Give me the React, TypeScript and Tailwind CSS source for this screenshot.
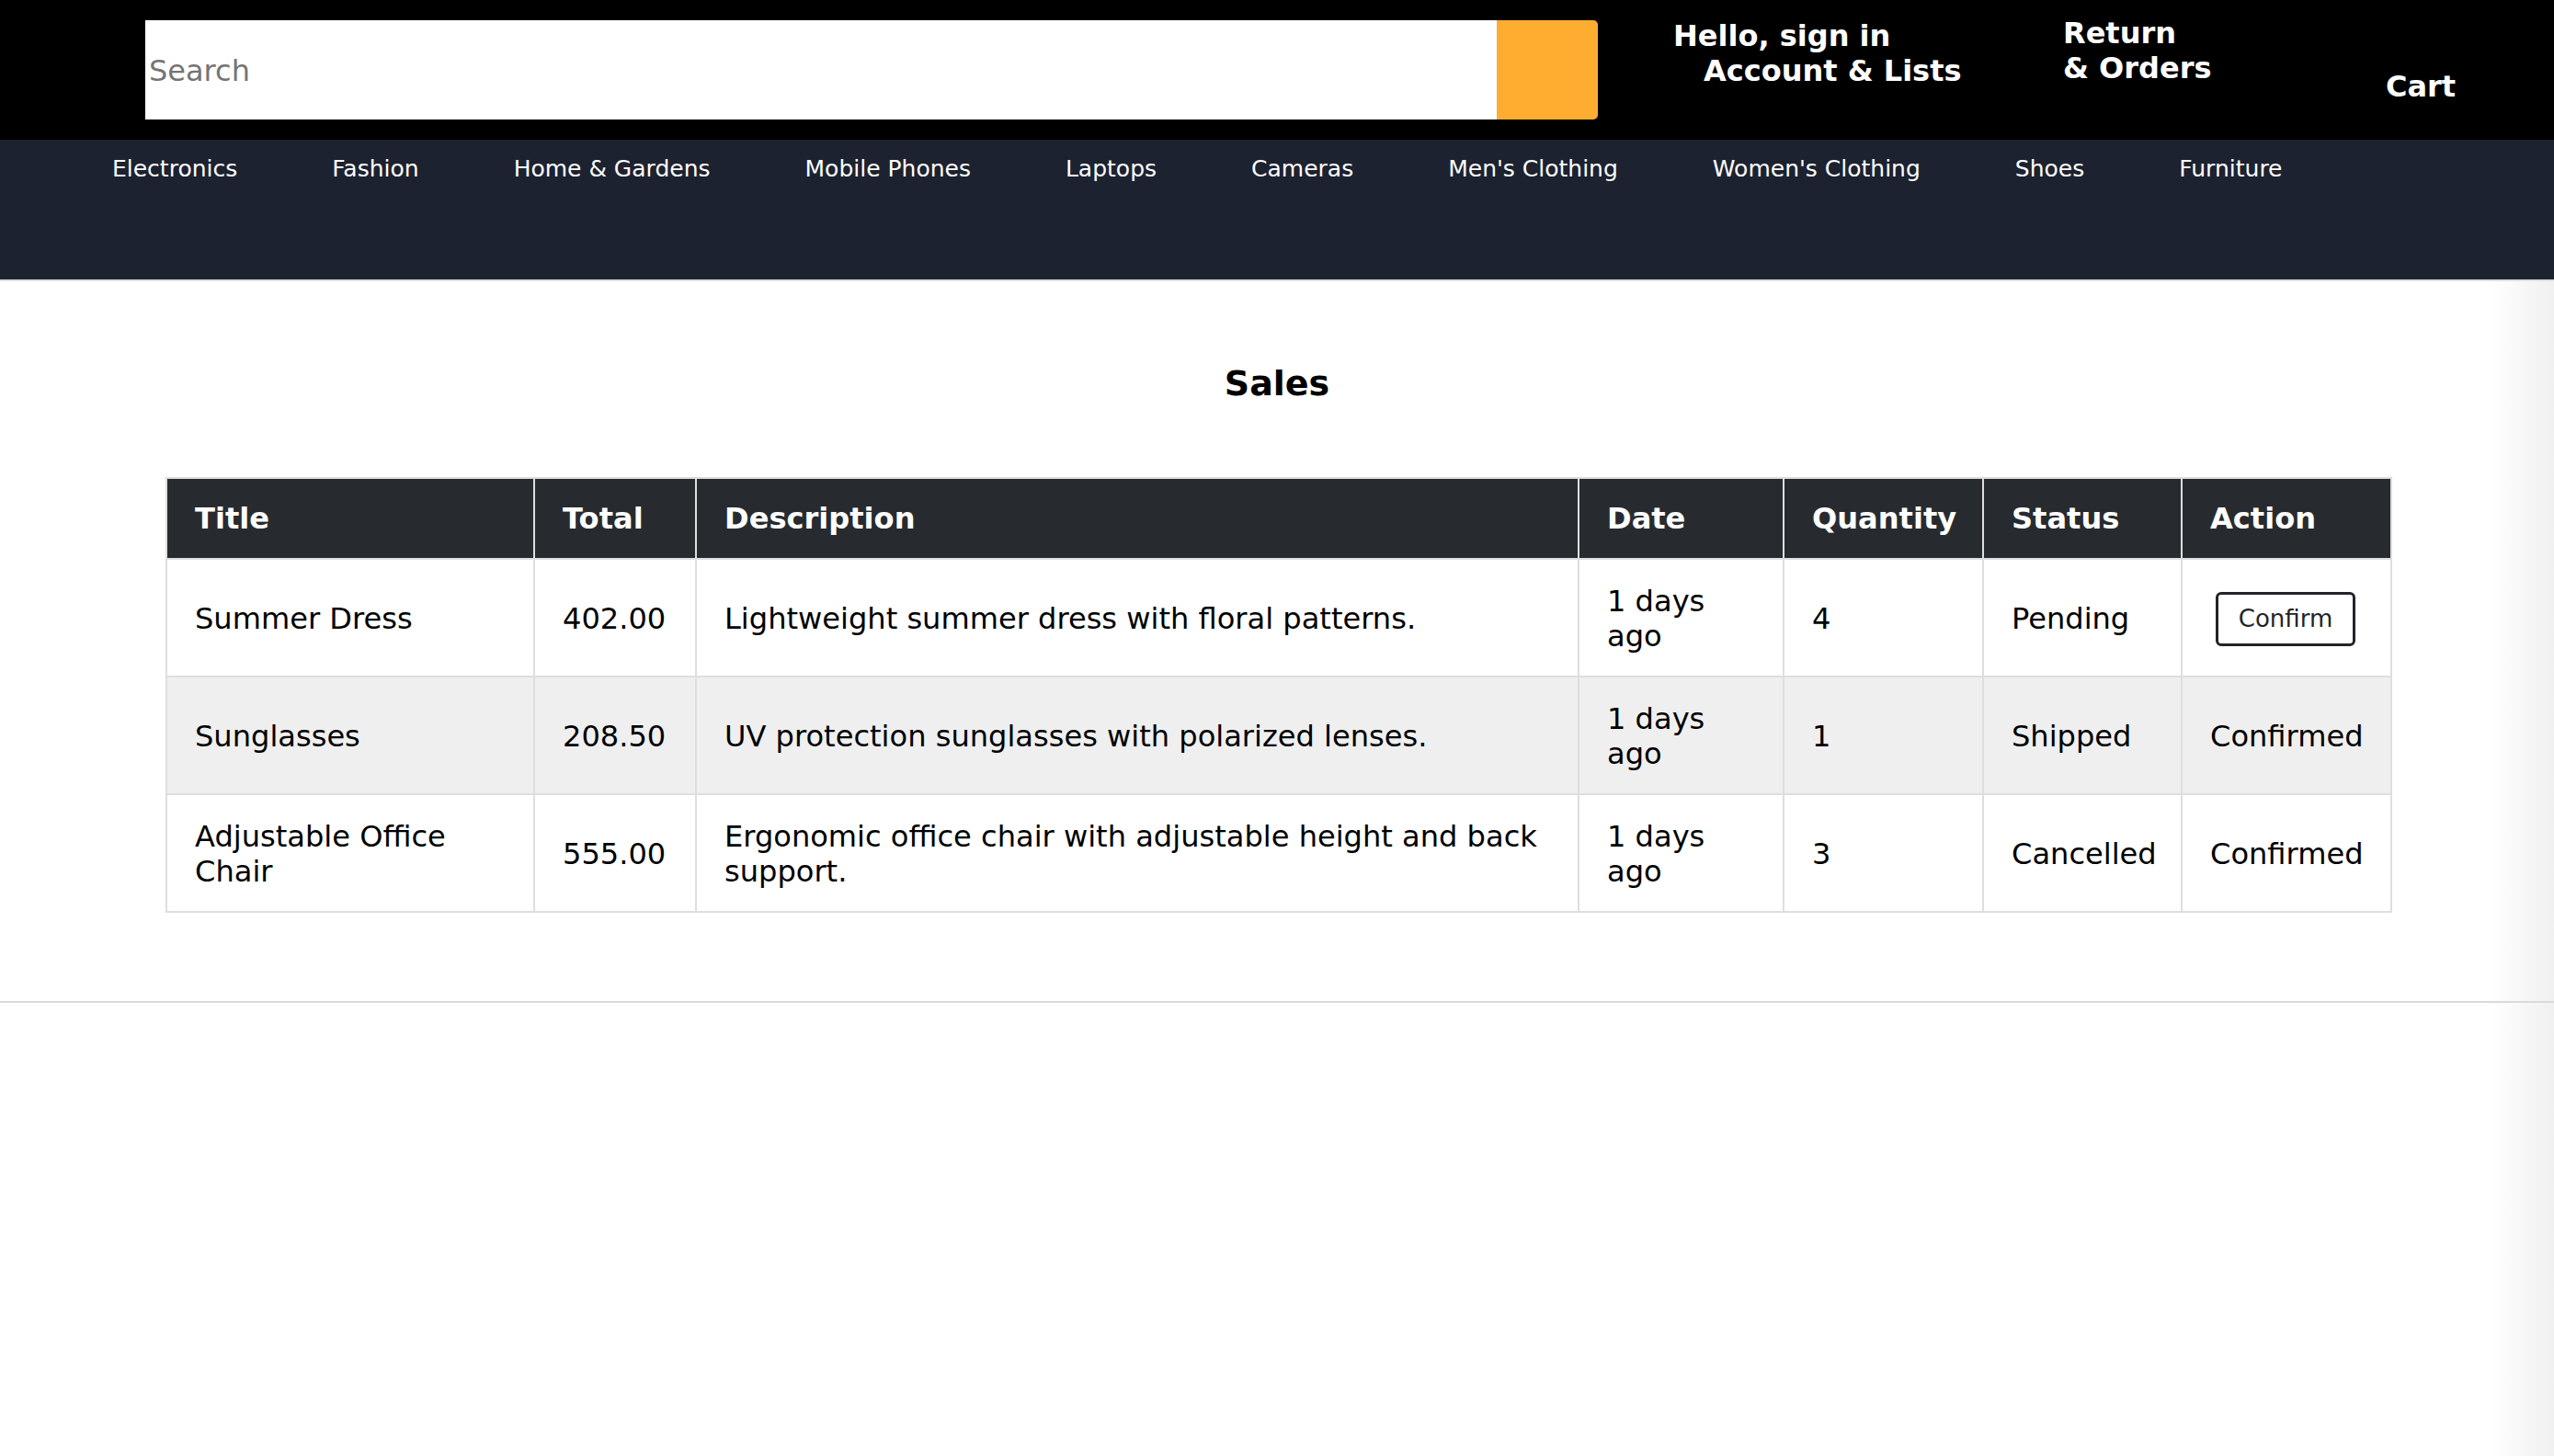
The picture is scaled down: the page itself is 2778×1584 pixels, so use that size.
import React from "react";

const categories = [
  "Electronics",
  "Fashion",
  "Home & Gardens",
  "Mobile Phones",
  "Laptops",
  "Cameras",
  "Men's Clothing",
  "Women's Clothing",
  "Shoes",
  "Furniture",
];

type Sale = {
  title: string;
  total: string;
  description: string;
  date: string;
  quantity: number;
  status: string;
  confirmed: boolean;
};

const sales: Sale[] = [
  {
    title: "Summer Dress",
    total: "402.00",
    description: "Lightweight summer dress with floral patterns.",
    date: "1 days ago",
    quantity: 4,
    status: "Pending",
    confirmed: false,
  },
  {
    title: "Sunglasses",
    total: "208.50",
    description: "UV protection sunglasses with polarized lenses.",
    date: "1 days ago",
    quantity: 1,
    status: "Shipped",
    confirmed: true,
  },
  {
    title: "Adjustable Office Chair",
    total: "555.00",
    description: "Ergonomic office chair with adjustable height and back support.",
    date: "1 days ago",
    quantity: 3,
    status: "Cancelled",
    confirmed: true,
  },
];

const headers = ["Title", "Total", "Description", "Date", "Quantity", "Status", "Action"];
const widths = [400, 176, 960, 223, 217, 216, 228];

function Header() {
  return (
    <header className="flex h-[152px] items-start bg-black text-[32px] font-bold text-white">
      {/* search */}
      <form className="ml-[158px] mt-[22px] flex" onSubmit={(e) => e.preventDefault()}>
        <input
          type="text"
          placeholder="Search"
          className="h-[108px] w-[1470px] bg-white pl-[4px] pt-[2px] text-[32px] font-normal text-black outline-none placeholder:text-[#757575]"
        />
        <button type="submit" className="h-[108px] w-[110px] rounded-r-[5px] bg-[#ffad30]" />
      </form>

      <div className="ml-[82px] mt-[20px] w-[424px] leading-[38px]">
        <div>Hello, sign in</div>
        <div className="pl-[33px]">Account &amp; Lists</div>
      </div>

      <div className="mt-[17px] w-[351px] leading-[38px]">
        <div>Return</div>
        <div>&amp; Orders</div>
      </div>

      <div className="mt-[75px] leading-[38px]">Cart</div>
    </header>
  );
}

function Nav() {
  return (
    <nav className="h-[154px] border-b-2 border-[#dedede] bg-[#1d2230] pl-[122px] pt-[13px]">
      <ul className="flex gap-[103px] text-[25px] text-white">
        {categories.map((c) => (
          <li key={c} className="cursor-pointer whitespace-nowrap">
            {c}
          </li>
        ))}
      </ul>
    </nav>
  );
}

function SalesTable() {
  return (
    <table className="ml-[180px] w-[2420px] table-fixed border-collapse border-2 border-[#dedede] text-[32.1px] leading-[38px] text-black">
      <colgroup>
        {widths.map((w, i) => (
          <col key={i} style={{ width: w }} />
        ))}
      </colgroup>
      <thead>
        <tr className="bg-[#272b30] text-white">
          {headers.map((h) => (
            <th key={h} className="border-2 border-[#dedede] px-[30px] py-[24px] text-left font-bold">
              {h}
            </th>
          ))}
        </tr>
      </thead>
      <tbody>
        {sales.map((s, i) => (
          <tr key={s.title} className={i % 2 === 1 ? "bg-[#efefef]" : "bg-white"}>
            <td className="border-2 border-[#dedede] px-[30px] pb-[24px] pt-[26px] align-middle">{s.title}</td>
            <td className="border-2 border-[#dedede] px-[30px] pb-[24px] pt-[26px] align-middle">{s.total}</td>
            <td className="border-2 border-[#dedede] px-[30px] pb-[24px] pt-[26px] align-middle">{s.description}</td>
            <td className="border-2 border-[#dedede] px-[30px] pb-[24px] pt-[26px] align-middle">{s.date}</td>
            <td className="border-2 border-[#dedede] px-[30px] pb-[24px] pt-[26px] align-middle">{s.quantity}</td>
            <td className="border-2 border-[#dedede] px-[30px] pb-[24px] pt-[26px] align-middle">{s.status}</td>
            <td className="border-2 border-[#dedede] px-[30px] pb-[24px] pt-[26px] align-middle">
              {s.confirmed ? (
                "Confirmed"
              ) : (
                <button className="ml-[6px] flex h-[59px] w-[152px] items-center justify-center rounded-[6px] border-[3px] border-[#212529] text-[26px] text-[#212529]">
                  Confirm
                </button>
              )}
            </td>
          </tr>
        ))}
      </tbody>
    </table>
  );
}

export default function App() {
  return (
    <div className="min-h-[1584px] bg-white font-['DejaVu_Sans',sans-serif]">
      <Header />
      <Nav />
      <main className="min-h-[1278px] bg-[linear-gradient(to_right,#ffffff_calc(100%-70px),#f0f0f0)]">
        <h2 className="pt-[89px] text-center text-[38px] font-bold leading-[44px] text-black">Sales</h2>
        <div className="mt-[80px]">
          <SalesTable />
        </div>
        <hr className="mt-[96px] border-t-2 border-[#dadada]" />
      </main>
    </div>
  );
}
